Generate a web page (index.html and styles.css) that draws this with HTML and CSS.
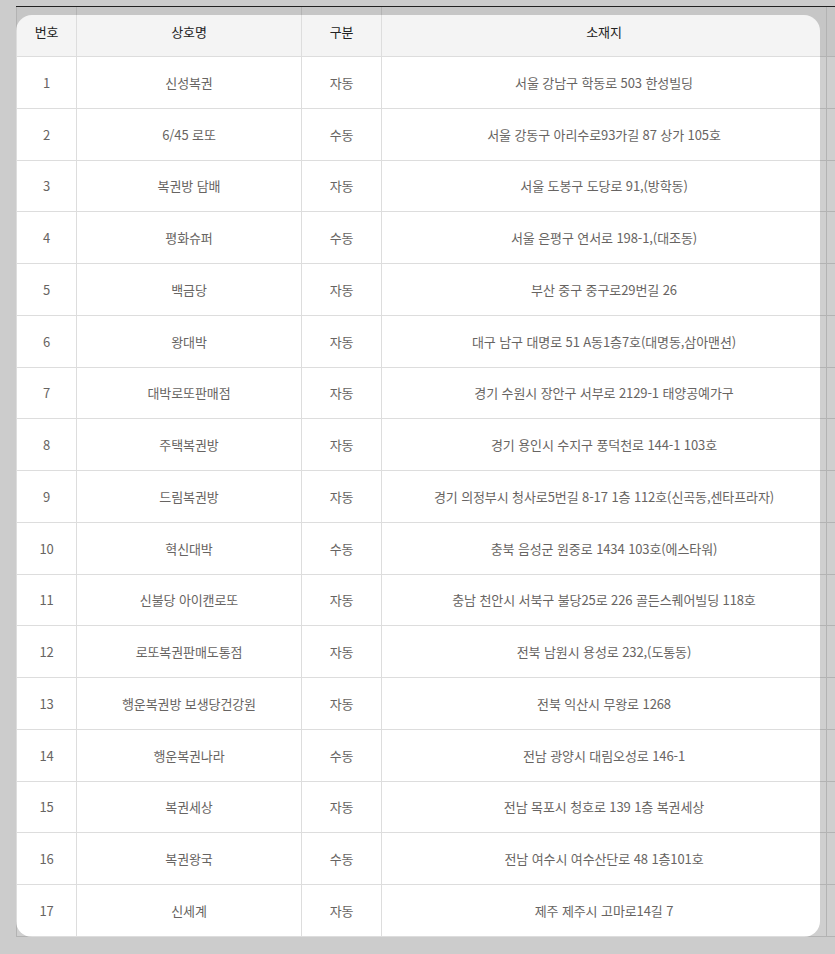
FILE: index.html
```html
<!DOCTYPE html>
<html lang="ko">
<head>
    <meta charset="UTF-8">
    <meta name="viewport" content="width=device-width, initial-scale=1.0">
    <title>판매점 목록</title>
    <link rel="stylesheet" href="styles.css">
</head>
<body>

    <div class="store-wrap">
        <table class="store-table">
            <thead>
                <tr>
                    <th class="col-no">번호</th>
                    <th class="col-name">상호명</th>
                    <th class="col-type">구분</th>
                    <th class="col-addr">소재지</th>
                    <th class="col-extra"></th>
                </tr>
            </thead>
            <tbody>
                <tr><td>1</td><td>신성복권</td><td>자동</td><td>서울 강남구 학동로 503 한성빌딩</td><td></td></tr>
                <tr><td>2</td><td>6/45 로또</td><td>수동</td><td>서울 강동구 아리수로93가길 87 상가 105호</td><td></td></tr>
                <tr><td>3</td><td>복권방 담배</td><td>자동</td><td>서울 도봉구 도당로 91,(방학동)</td><td></td></tr>
                <tr><td>4</td><td>평화슈퍼</td><td>수동</td><td>서울 은평구 연서로 198-1,(대조동)</td><td></td></tr>
                <tr><td>5</td><td>백금당</td><td>자동</td><td>부산 중구 중구로29번길 26</td><td></td></tr>
                <tr><td>6</td><td>왕대박</td><td>자동</td><td>대구 남구 대명로 51 A동1층7호(대명동,삼아맨션)</td><td></td></tr>
                <tr><td>7</td><td>대박로또판매점</td><td>자동</td><td>경기 수원시 장안구 서부로 2129-1 태양공예가구</td><td></td></tr>
                <tr><td>8</td><td>주택복권방</td><td>자동</td><td>경기 용인시 수지구 풍덕천로 144-1 103호</td><td></td></tr>
                <tr><td>9</td><td>드림복권방</td><td>자동</td><td>경기 의정부시 청사로5번길 8-17 1층 112호(신곡동,센타프라자)</td><td></td></tr>
                <tr><td>10</td><td>혁신대박</td><td>수동</td><td>충북 음성군 원중로 1434 103호(에스타워)</td><td></td></tr>
                <tr><td>11</td><td>신불당 아이캔로또</td><td>자동</td><td>충남 천안시 서북구 불당25로 226 골든스퀘어빌딩 118호</td><td></td></tr>
                <tr><td>12</td><td>로또복권판매도통점</td><td>자동</td><td>전북 남원시 용성로 232,(도통동)</td><td></td></tr>
                <tr><td>13</td><td>행운복권방 보생당건강원</td><td>자동</td><td>전북 익산시 무왕로 1268</td><td></td></tr>
                <tr><td>14</td><td>행운복권나라</td><td>수동</td><td>전남 광양시 대림오성로 146-1</td><td></td></tr>
                <tr><td>15</td><td>복권세상</td><td>자동</td><td>전남 목포시 청호로 139 1층 복권세상</td><td></td></tr>
                <tr><td>16</td><td>복권왕국</td><td>수동</td><td>전남 여수시 여수산단로 48 1층101호</td><td></td></tr>
                <tr><td>17</td><td>신세계</td><td>자동</td><td>제주 제주시 고마로14길 7</td><td></td></tr>
            </tbody>
        </table>
        <div class="card-mask"></div>
    </div>

</body>
</html>
```

FILE: styles.css
```css
html, body {
    margin: 0;
    padding: 0;
    overflow: hidden;
}
body {
    font-family: "Noto Sans CJK KR", "Noto Sans", sans-serif;
    background-color: #cccccc;
    height: 954px;
}
.store-wrap {
    position: relative;
    margin: 6px 0 0 16px;
    width: 819px;
    border-top: 1px solid #222;
    overflow: hidden;
}
.store-table {
    border-collapse: collapse;
    table-layout: fixed;
    width: 819px;
    background-color: #fff;
    font-size: 13px;
    letter-spacing: -0.1px;
    border-left: 1px solid #ddd;
}
.store-table th,
.store-table td {
    border-right: 1px solid #ddd;
    border-bottom: 1px solid #ddd;
    text-align: center;
    padding: 0;
    white-space: nowrap;
}
.store-table th {
    height: 49px;
    background-color: #f4f4f4;
    color: #222;
    font-weight: normal;
}
.store-table td {
    height: 50.76px;
    color: #676462;
}
.col-no { width: 59px; }
.col-name { width: 224px; }
.col-type { width: 79px; }
.col-addr { width: 444px; }
.col-extra { width: 8px; }

/* dim everything outside the rounded card */
.card-mask {
    position: absolute;
    left: 0;
    top: 8px;
    width: 804px;
    height: 922px;
    border-radius: 16px;
    box-shadow: 0 0 0 600px rgba(0, 0, 0, 0.19);
    pointer-events: none;
}
```
